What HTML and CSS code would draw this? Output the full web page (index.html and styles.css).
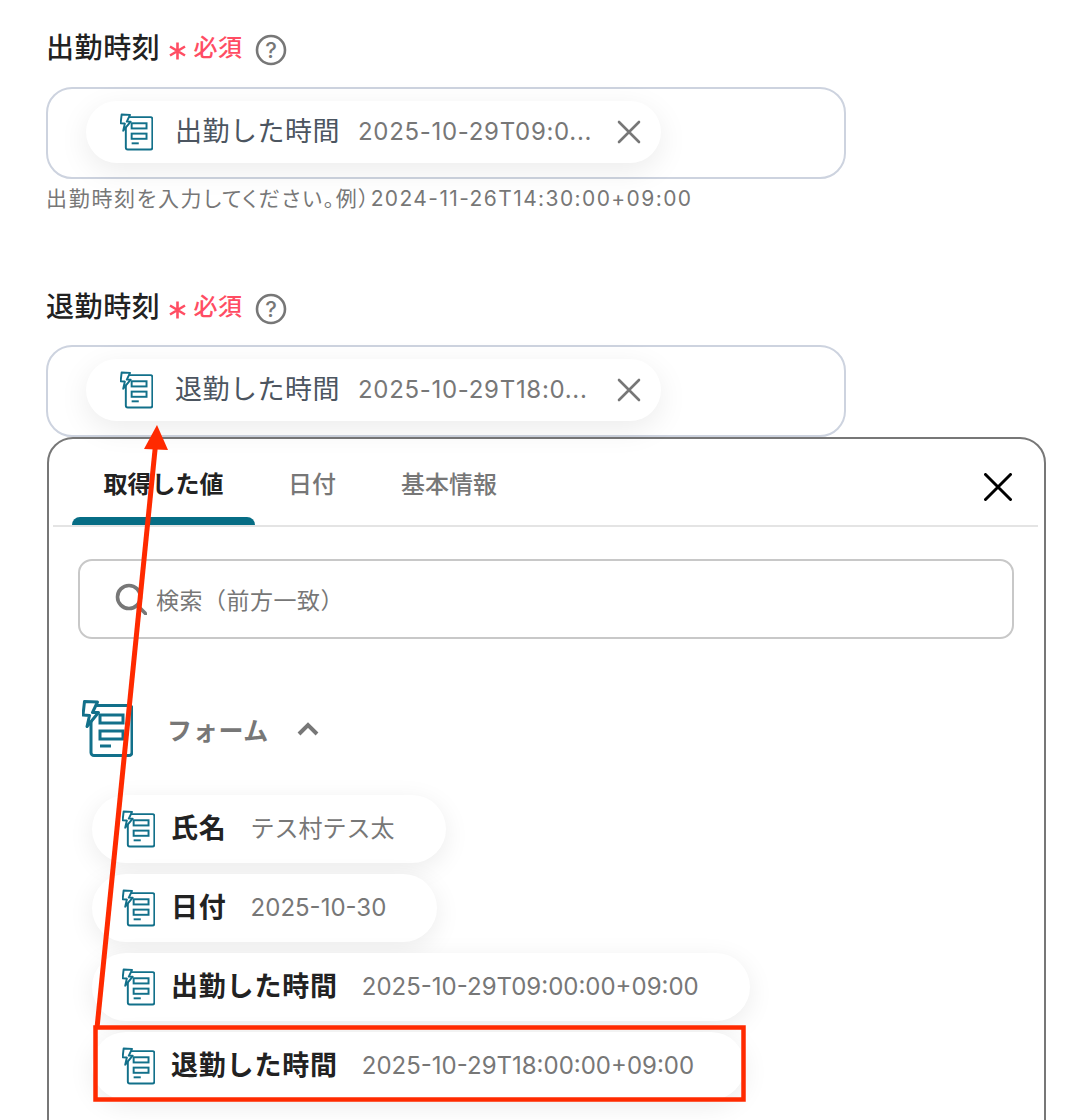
FILE: index.html
```html
<!DOCTYPE html>
<html lang="ja">
<head>
    <meta charset="UTF-8">
    <meta name="viewport" content="width=device-width, initial-scale=1.0">
    <title>出勤時刻</title>
    <link rel="stylesheet" href="styles.css">
</head>
<body>
    <svg class="icon-defs" width="0" height="0">
        <symbol id="form-icon" viewBox="0 0 51 57">
            <rect x="9" y="5.5" width="41" height="50" rx="3" fill="#fff" stroke="currentColor" stroke-width="3"/>
            <rect x="18" y="15" width="23" height="8" fill="none" stroke="currentColor" stroke-width="3"/>
            <rect x="18" y="31" width="23" height="8" fill="none" stroke="currentColor" stroke-width="3"/>
            <path d="M18 46h11" fill="none" stroke="currentColor" stroke-width="3"/>
            <path d="M2.5 1.5 15.5 2 10.5 12.5H16.5L5 26.5 7.5 15.5 1 15Z" fill="#fff" stroke="currentColor" stroke-width="3" stroke-linejoin="round"/>
        </symbol>
        <symbol id="star-icon" viewBox="0 0 18 18">
            <path d="M9 .5V17.500M1.500 4.500 16.500 13.500M16.500 4.500 1.500 13.500" fill="none" stroke="currentColor" stroke-width="2.6"/>
        </symbol>
    </svg>

    <div class="page">
        <div class="field">
            <div class="field-label">
                <span class="label-text">出勤時刻</span>
                <svg class="star"><use href="#star-icon"/></svg>
                <span class="required">必須</span>
                <svg class="help" viewBox="0 0 32 32"><circle cx="16" cy="16" r="14" fill="none" stroke="#777" stroke-width="2.6"/><text x="16" y="23.500" text-anchor="middle" class="help-mark">?</text></svg>
            </div>
            <div class="input-box">
                <div class="chip">
                    <svg class="chip-icon"><use href="#form-icon"/></svg>
                    <span class="chip-name">出勤した時間</span>
                    <span class="chip-value">2025-10-29T09:0...</span>
                    <svg class="chip-x" viewBox="0 0 24 24"><path d="M2 2 22 22M22 2 2 22" stroke="#777" stroke-width="2.6" stroke-linecap="round"/></svg>
                </div>
            </div>
            <p class="hint">出勤時刻を入力してください。例）<span class="hint-num">2024-11-26T14:30:00+09:00</span></p>
        </div>

        <div class="field field-open">
            <div class="field-label">
                <span class="label-text">退勤時刻</span>
                <svg class="star"><use href="#star-icon"/></svg>
                <span class="required">必須</span>
                <svg class="help" viewBox="0 0 32 32"><circle cx="16" cy="16" r="14" fill="none" stroke="#777" stroke-width="2.6"/><text x="16" y="23.500" text-anchor="middle" class="help-mark">?</text></svg>
            </div>
            <div class="input-box">
                <div class="chip">
                    <svg class="chip-icon"><use href="#form-icon"/></svg>
                    <span class="chip-name">退勤した時間</span>
                    <span class="chip-value">2025-10-29T18:0...</span>
                    <svg class="chip-x" viewBox="0 0 24 24"><path d="M2 2 22 22M22 2 2 22" stroke="#777" stroke-width="2.6" stroke-linecap="round"/></svg>
                </div>
            </div>
        </div>

        <div class="panel">
            <div class="tabs">
                <span class="tab active">取得した値</span>
                <span class="tab">日付</span>
                <span class="tab">基本情報</span>
                <svg class="panel-close" viewBox="0 0 28 28"><path d="M1.5 1.5 26.5 26.5M26.5 1.5 1.5 26.5" stroke="#000" stroke-width="3" stroke-linecap="round"/></svg>
            </div>

            <div class="search">
                <svg class="search-icon" viewBox="0 0 32 32"><circle cx="14" cy="14" r="11.5" fill="none" stroke="#777" stroke-width="3.6"/><path d="M23 23 31 31" stroke="#777" stroke-width="3.6" stroke-linecap="round"/></svg>
                <span>検索（前方一致）</span>
            </div>

            <div class="group-head">
                <svg class="group-icon"><use href="#form-icon"/></svg>
                <span class="group-title">フォーム</span>
                <svg class="chevron" viewBox="0 0 24 14"><path d="M3 12 12 3 21 12" fill="none" stroke="#777" stroke-width="4"/></svg>
            </div>

            <div class="value-list">
                <div class="value-chip">
                    <svg class="chip-icon"><use href="#form-icon"/></svg>
                    <span class="value-name">氏名</span>
                    <span class="chip-value">テス村テス太</span>
                </div>
                <div class="value-chip">
                    <svg class="chip-icon"><use href="#form-icon"/></svg>
                    <span class="value-name">日付</span>
                    <span class="chip-value">2025-10-30</span>
                </div>
                <div class="value-chip">
                    <svg class="chip-icon"><use href="#form-icon"/></svg>
                    <span class="value-name">出勤した時間</span>
                    <span class="chip-value">2025-10-29T09:00:00+09:00</span>
                </div>
                <div class="value-chip">
                    <svg class="chip-icon"><use href="#form-icon"/></svg>
                    <span class="value-name">退勤した時間</span>
                    <span class="chip-value">2025-10-29T18:00:00+09:00</span>
                </div>
            </div>
        </div>

        <!-- annotation drawn over the screenshot -->
        <svg class="annotation" viewBox="0 0 1084 1120">
            <path d="M97 1028 155.500 445" fill="none" stroke="#ff2a00" stroke-width="5"/>
            <path d="M157 425 168 450 144 449Z" fill="#ff2a00"/>
            <rect x="95.500" y="1027.500" width="648" height="72" fill="none" stroke="#ff2a00" stroke-width="4.500"/>
        </svg>
    </div>
</body>
</html>
```

FILE: styles.css
```css
html, body {
    margin: 0;
    height: 1120px;
    overflow: hidden;
    background: #fff;
}
body {
    font-family: Inter, "Noto Sans CJK JP", sans-serif;
    color: #222;
}
.icon-defs {
    position: absolute;
}
.page {
    position: relative;
    height: 1120px;
    overflow: hidden;
    padding: 28px 0 0 46px;
    box-sizing: border-box;
}
.field {
    margin-bottom: 73px;
}
.field-open {
    margin-bottom: 0;
}
.field-open .field-label {
    margin-bottom: 18px;
}
.field-label {
    display: flex;
    align-items: center;
    height: 40px;
    margin-bottom: 19px;
    font-size: 28px;
    font-weight: 500;
    line-height: 40px;
}
.label-text {
    letter-spacing: 0.6px;
}
.star {
    width: 19px;
    height: 18px;
    margin: 6px 0 0 8px;
    color: #ff4d63;
}
.required {
    margin-left: 6px;
    color: #ff4d63;
    font-size: 24px;
    letter-spacing: 0.5px;
    line-height: 32px;
}
.help {
    width: 32px;
    height: 32px;
    margin-left: 13px;
    margin-top: 4px;
}
.help-mark {
    font-size: 22px;
    font-weight: 500;
    fill: #777;
}
.input-box {
    display: flex;
    align-items: center;
    box-sizing: border-box;
    width: 800px;
    height: 92px;
    padding: 0 0 3px 38px;
    border: 2px solid #cdd3df;
    border-radius: 26px;
}
.chip {
    display: flex;
    align-items: center;
    height: 62px;
    padding: 0 20px 0 34px;
    border-radius: 31px;
    background: #fff;
    box-shadow: 0 8px 30px rgba(0, 0, 0, 0.08);
}
.chip-icon {
    flex: none;
    width: 33px;
    height: 38px;
    color: #12708a;
}
.chip-name {
    margin-left: 22px;
    color: #4c5560;
    font-size: 27px;
    letter-spacing: 0.5px;
    line-height: 36px;
}
.chip-value {
    margin-left: 24px;
    color: #777;
    font-size: 24px;
    line-height: 32px;
}
.chip .chip-value {
    width: 234px;
    margin-left: 18px;
    letter-spacing: 0.7px;
    white-space: nowrap;
}
.chip-x {
    width: 24px;
    height: 24px;
    margin-left: 25px;
}
.hint {
    margin: 5px 0 0;
    color: #777;
    font-size: 21px;
    font-feature-settings: "palt";
    letter-spacing: 1.7px;
    line-height: 30px;
}
.hint-num {
    letter-spacing: 1.4px;
}
.panel {
    box-sizing: border-box;
    width: 999px;
    height: 760px;
    margin-left: 1px;
    padding: 0 6px 0 4px;
    border: 2px solid #777;
    border-radius: 26px;
    background: #fff;
}
.tabs {
    display: flex;
    gap: 1px;
    align-items: flex-start;
    height: 88px;
    padding-left: 19px;
    box-sizing: border-box;
    border-bottom: 2px solid #e4e4e4;
}
.tab {
    position: relative;
    height: 86px;
    box-sizing: border-box;
    padding: 28px 32px 0;
    color: #777;
    font-size: 24px;
    font-weight: 500;
    line-height: 36px;
}
.tab.active {
    padding: 28px 31.5px 0;
    color: #222;
    font-weight: 700;
}
.tab.active::after {
    content: "";
    position: absolute;
    right: 0;
    bottom: 0;
    left: 0;
    height: 8px;
    border-radius: 8px 8px 0 0;
    background: #066d85;
}
.panel-close {
    width: 28px;
    height: 28px;
    margin: 34px 26px 0 auto;
}
.search {
    display: flex;
    align-items: center;
    box-sizing: border-box;
    width: 936px;
    height: 80px;
    margin: 32px 0 0 25px;
    padding-left: 35px;
    border: 2px solid #c8c8c8;
    border-radius: 14px;
    color: #777;
    font-size: 23px;
    letter-spacing: 0.5px;
}
.search-icon {
    width: 32px;
    height: 32px;
    margin-right: 9px;
}
.group-head {
    display: flex;
    align-items: center;
    height: 57px;
    margin: 61px 0 38px 29px;
}
.group-icon {
    width: 51px;
    height: 57px;
    color: #12708a;
}
.group-title {
    margin-left: 34px;
    color: #777;
    font-size: 25px;
    font-weight: 700;
    letter-spacing: 0.7px;
}
.chevron {
    width: 24px;
    height: 14px;
    margin-left: 27px;
}
.value-list {
    display: flex;
    flex-direction: column;
    align-items: flex-start;
    gap: 11px;
    margin-left: 39px;
}
.value-chip {
    display: flex;
    align-items: center;
    height: 68px;
    padding: 0 51px 0 30px;
    border-radius: 34px;
    background: #fff;
    box-shadow: 0 6px 26px rgba(0, 0, 0, 0.08);
}
.value-name {
    margin-left: 16px;
    color: #222;
    font-size: 27px;
    font-weight: 700;
    letter-spacing: 0.8px;
    line-height: 36px;
}
.annotation {
    position: absolute;
    top: 0;
    left: 0;
    width: 1084px;
    height: 1120px;
    pointer-events: none;
}
```
